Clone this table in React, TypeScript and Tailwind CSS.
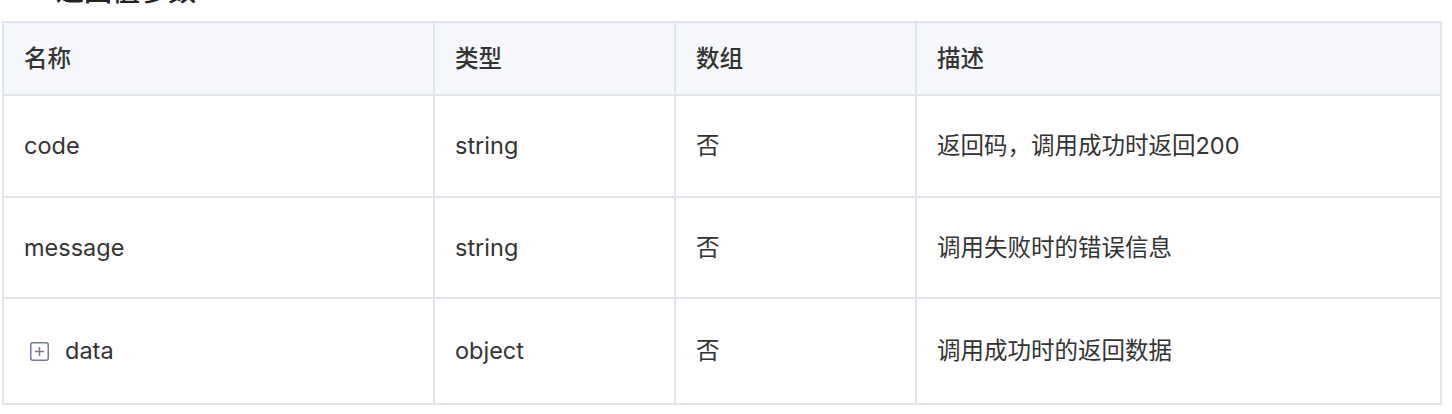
import React from "react";

const font = { fontFamily: '"Inter", "Noto Sans CJK SC", sans-serif' };

function PlusBox() {
  return (
    <svg width="19" height="19" viewBox="0 0 19 19" className="mr-[16px] shrink-0">
      <rect x="0.75" y="0.75" width="17.5" height="17.5" rx="2" fill="none" stroke="#747b93" strokeWidth="1.5" />
      <path d="M9.5 5v9M5 9.5h9" stroke="#747b93" strokeWidth="1.5" />
    </svg>
  );
}

const rows = [
  { name: "code", type: "string", arr: "否", desc: "返回码，调用成功时返回200", h: "h-[102px]" },
  { name: "message", type: "string", arr: "否", desc: "调用失败时的错误信息", h: "h-[101px]" },
  { name: "data", type: "object", arr: "否", desc: "调用成功时的返回数据", h: "h-[104px]", icon: true },
];

export default function App() {
  return (
    <div className="bg-white w-[1452px] h-[414px] overflow-hidden text-[#333333]" style={font}>
      <div className="h-[21px] overflow-hidden">
        <div className="mt-[-23px] pl-[28px] text-[28px] leading-[28px] font-medium text-[#222]">一返回值参数</div>
      </div>
      <div className="ml-[2px] w-[1440px] border-2 border-[#e1e5ec] text-[23.5px]">
        <div className="flex h-[73px] bg-[#f6f8fb] border-b-2 border-[#e1e5ec] font-medium">
          <div className="w-[431px] border-r-2 border-[#e1e5ec] flex items-center pl-5">名称</div>
          <div className="w-[241px] border-r-2 border-[#e1e5ec] flex items-center pl-5">类型</div>
          <div className="w-[241px] border-r-2 border-[#e1e5ec] flex items-center pl-5">数组</div>
          <div className="flex-1 flex items-center pl-5">描述</div>
        </div>
        {rows.map((r, i) => (
          <div key={r.name} className={`flex ${r.h} ${i < rows.length - 1 ? "border-b-2 border-[#e1e5ec]" : ""}`}>
            <div className="w-[431px] border-r-2 border-[#e1e5ec] flex items-center pl-5">
              {r.icon && <div className="ml-[6px] flex items-center"><PlusBox /></div>}
              <span>{r.name}</span>
            </div>
            <div className="w-[241px] border-r-2 border-[#e1e5ec] flex items-center pl-5">{r.type}</div>
            <div className="w-[241px] border-r-2 border-[#e1e5ec] flex items-center pl-5">{r.arr}</div>
            <div className="flex-1 flex items-center pl-5">{r.desc}</div>
          </div>
        ))}
      </div>
    </div>
  );
}
